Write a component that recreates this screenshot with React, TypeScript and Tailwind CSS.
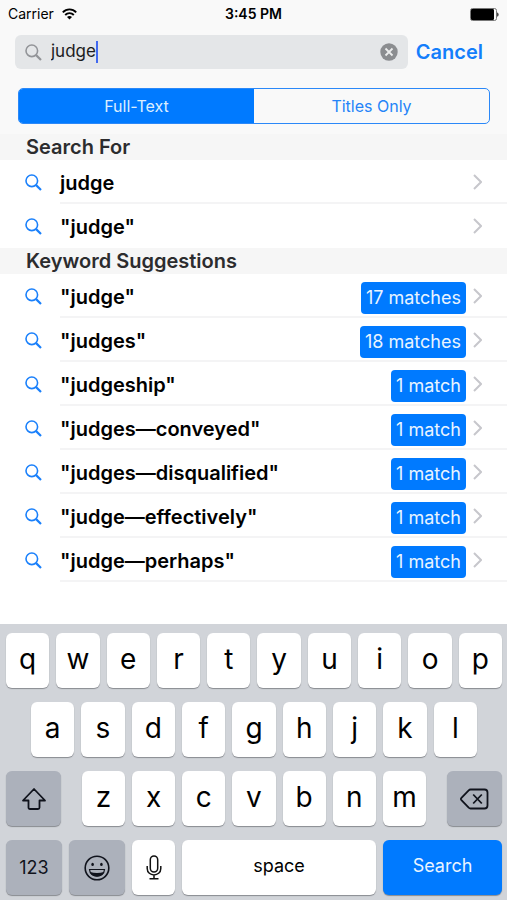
import { useState } from "react";
import type { ReactNode } from "react";

const suggestions = [
  { term: '"judge"', count: 17 },
  { term: '"judges"', count: 18 },
  { term: '"judgeship"', count: 1 },
  { term: '"judges—conveyed"', count: 1 },
  { term: '"judges—disqualified"', count: 1 },
  { term: '"judge—effectively"', count: 1 },
  { term: '"judge—perhaps"', count: 1 },
];

function SearchIcon({ className }: { className: string }) {
  return (
    <svg className={className} width="17" height="17" viewBox="0 0 17 17" fill="none" stroke="currentColor">
      <circle cx="6.8" cy="6.8" r="5.8" strokeWidth="1.6" />
      <path d="M11.1 11.1L16 16" strokeWidth="2.2" />
    </svg>
  );
}

function StatusBar() {
  return (
    <div className="grid h-7 grid-cols-3 items-center px-2 text-black">
      <div className="flex items-center gap-2 text-sm">
        <span>Carrier</span>
        <svg width="15" height="12" viewBox="0 0 15 12" fill="none" stroke="currentColor" strokeWidth="1.9">
          <path d="M0.8 4.4C4.6 0.4 10.4 0.4 14.2 4.4" />
          <path d="M3.2 7C5.6 4.5 9.4 4.5 11.8 7" />
          <path d="M7.5 11.4L5 8.9C6.4 7.6 8.6 7.6 10 8.9Z" fill="currentColor" stroke="none" />
        </svg>
      </div>
      <span className="text-center text-sm font-semibold">3:45 PM</span>
      <svg className="justify-self-end" width="29" height="13" viewBox="0 0 29 13">
        <rect x="0.5" y="0.5" width="26" height="12" rx="2" fill="none" stroke="#777" />
        <rect x="1" y="1" width="23" height="11" rx="1.2" fill="#000" />
        <path d="M27.2 4.4C29 4.8 29 8.2 27.2 8.6Z" fill="#222" />
      </svg>
    </div>
  );
}

function SectionTitle({ children }: { children: ReactNode }) {
  return <h2 className="bg-[#f6f6f6] pl-[26px] text-xl leading-[26px] font-semibold text-[#2c2c2e]">{children}</h2>;
}

function Row({ term, count, last }: { term: string; count?: number; last?: boolean }) {
  return (
    <li>
      <a className="flex h-11 pl-[25px]" href="#results">
        <SearchIcon className="mr-[18px] shrink-0 self-center text-[#1a80fb]" />
        <span
          className={`flex flex-1 items-center border-y-2 border-t-transparent pr-[25px] ${last ? "border-b-transparent" : "border-b-[#f4f4f5]"}`}
        >
          <span className="flex-1 pt-[2px] text-xl font-semibold text-black">{term}</span>
          {count ? (
            <span className="mt-1 mr-[7px] rounded bg-[#007aff] px-[5px] text-lg leading-8 text-[#e9f4ff]">
              {count} {count === 1 ? "match" : "matches"}
            </span>
          ) : null}
          <svg width="9" height="16" viewBox="0 0 9 16" fill="none" stroke="#c7c7cc" strokeWidth="2">
            <path d="M1 1L8 8L1 15" />
          </svg>
        </span>
      </a>
    </li>
  );
}

const keyBase = "flex h-[55px] min-w-0 items-center justify-center rounded-md shadow-[0_1px_1px_#888b90]";

function LetterKey({ letter }: { letter: string }) {
  return (
    <button className={`${keyBase} flex-1 bg-white pb-1 text-[28px] text-black`} type="button">
      {letter}
    </button>
  );
}

function letterKeys(letters: string) {
  return letters.split("").map((letter) => <LetterKey key={letter} letter={letter} />);
}

function Keyboard() {
  return (
    <div className="flex flex-col gap-[14px] bg-[#d1d4d9] pt-[9px] pr-[5px] pb-[5px] pl-[6px]">
      <div className="flex gap-[7px]">{letterKeys("qwertyuiop")}</div>
      <div className="flex gap-[7px] px-[25px]">{letterKeys("asdfghjkl")}</div>
      <div className="flex gap-[21px]">
        <button className={`${keyBase} w-[55px] bg-[#acb1bb]`} type="button" aria-label="Shift">
          <svg width="26" height="24" viewBox="0 0 26 24" fill="none" stroke="#10131c" strokeWidth="1.8" strokeLinejoin="round">
            <path d="M13 2L24 13.5H18.5V20.5Q18.5 22 17 22H9Q7.5 22 7.5 20.5V13.5H2Z" />
          </svg>
        </button>
        <div className="flex flex-1 gap-[7px]">{letterKeys("zxcvbnm")}</div>
        <button className={`${keyBase} w-[55px] bg-[#acb1bb]`} type="button" aria-label="Delete">
          <svg width="29" height="22" viewBox="0 0 29 22" fill="none" stroke="#10131c" strokeWidth="1.8" strokeLinejoin="round">
            <path d="M10.5 1.5H24.5Q27.5 1.5 27.5 4.5V17.5Q27.5 20.5 24.5 20.5H10.5Q9.5 20.5 8.7 19.7L1.2 11.8Q0.6 11 1.2 10.2L8.7 2.3Q9.5 1.5 10.5 1.5Z" />
            <path d="M13.2 6.5L21.8 15.5M21.8 6.5L13.2 15.5" />
          </svg>
        </button>
      </div>
      <div className="flex gap-[7px]">
        <button className={`${keyBase} w-14 bg-[#acb1bb] text-lg text-[#10131c]`} type="button">
          123
        </button>
        <button className={`${keyBase} w-14 bg-[#acb1bb]`} type="button" aria-label="Emoji">
          <svg width="26" height="26" viewBox="0 0 26 26" fill="none" stroke="#10131c" strokeWidth="1.6">
            <circle cx="13" cy="13" r="11.8" />
            <ellipse cx="8.6" cy="9.4" rx="1.3" ry="1.6" fill="#10131c" stroke="none" />
            <ellipse cx="17.4" cy="9.4" rx="1.3" ry="1.6" fill="#10131c" stroke="none" />
            <path d="M5.5 14.5H20.5C20 23.5 6 23.5 5.500 14.5Z" strokeWidth="1.2" />
            <path d="M6 17Q13 19 20 17C18 23 8 23 6 17Z" fill="#10131c" stroke="none" />
          </svg>
        </button>
        <button className={`${keyBase} w-[43px] bg-white`} type="button" aria-label="Dictate">
          <svg width="16" height="25" viewBox="0 0 16 25" fill="none" stroke="#111" strokeWidth="1.5">
            <rect x="4.3" y="1" width="7.4" height="16" rx="3.7" />
            <path d="M1.2 11V13.5C1.2 22 14.8 22 14.8 13.5V11M8 20V23.5M3.5 23.7H12.5" />
          </svg>
        </button>
        <button className={`${keyBase} flex-1 bg-white pb-1 text-lg text-black`} type="button">
          space
        </button>
        <button className={`${keyBase} w-[119px] bg-[#007aff] pb-1 text-lg text-[#e9f4ff]`} type="submit" form="search">
          Search
        </button>
      </div>
    </div>
  );
}

export default function App() {
  const [query, setQuery] = useState("judge");
  const [scope, setScope] = useState("Full-Text");

  return (
    <div className="flex min-h-screen flex-col justify-between bg-white font-[Inter,'Liberation_Sans',sans-serif]">
      <div>
        <header className="bg-[#f9f9f9] pb-[10px]">
          <StatusBar />
          <form
            className="mt-[7px] flex items-center gap-2 pr-6 pl-[15px]"
            id="search"
            onSubmit={(event) => event.preventDefault()}
          >
            <div className="flex h-[34px] flex-1 items-center rounded-md bg-[#e4e6e8] px-[10px]">
              <label className="flex flex-1 items-center">
                <SearchIcon className="mr-[9px] text-[#929498]" />
                <input
                  className="field-sizing-content bg-transparent text-[17px] text-[#1c1c1e] caret-transparent outline-none"
                  aria-label="Search"
                  value={query}
                  onChange={(event) => setQuery(event.target.value)}
                />
                <span className="h-[22px] w-[2px] bg-[#4169f0]" />
              </label>
              <button type="button" aria-label="Clear" onClick={() => setQuery("")}>
                <svg width="18" height="18" viewBox="0 0 18 18" stroke="#eceded" strokeWidth="1.8">
                  <circle cx="9" cy="9" r="8.7" fill="#8b8d90" stroke="none" />
                  <path d="M5.5 5.5L12.5 12.5M12.5 5.5L5.5 12.5" />
                </svg>
              </button>
            </div>
            <button className="text-xl font-semibold text-[#147efb]" type="button">
              Cancel
            </button>
          </form>
          <div className="mr-[17px] ml-[18px] mt-[19px] flex h-9 overflow-hidden rounded-[5px] border border-[#2b88f8]">
            {["Full-Text", "Titles Only"].map((name) => (
              <button
                className={`flex-1 text-base ${scope === name ? "bg-[#007aff] text-[#dceeff]" : "text-[#2584f8]"}`}
                type="button"
                aria-pressed={scope === name}
                key={name}
                onClick={() => setScope(name)}
              >
                {name}
              </button>
            ))}
          </div>
        </header>
        <main>
          <SectionTitle>Search For</SectionTitle>
          <ul>
            <Row term="judge" />
            <Row term={'"judge"'} last />
          </ul>
          <SectionTitle>Keyword Suggestions</SectionTitle>
          <ul>
            {suggestions.map((item) => (
              <Row term={item.term} count={item.count} key={item.term} />
            ))}
          </ul>
        </main>
      </div>
      <Keyboard />
    </div>
  );
}
